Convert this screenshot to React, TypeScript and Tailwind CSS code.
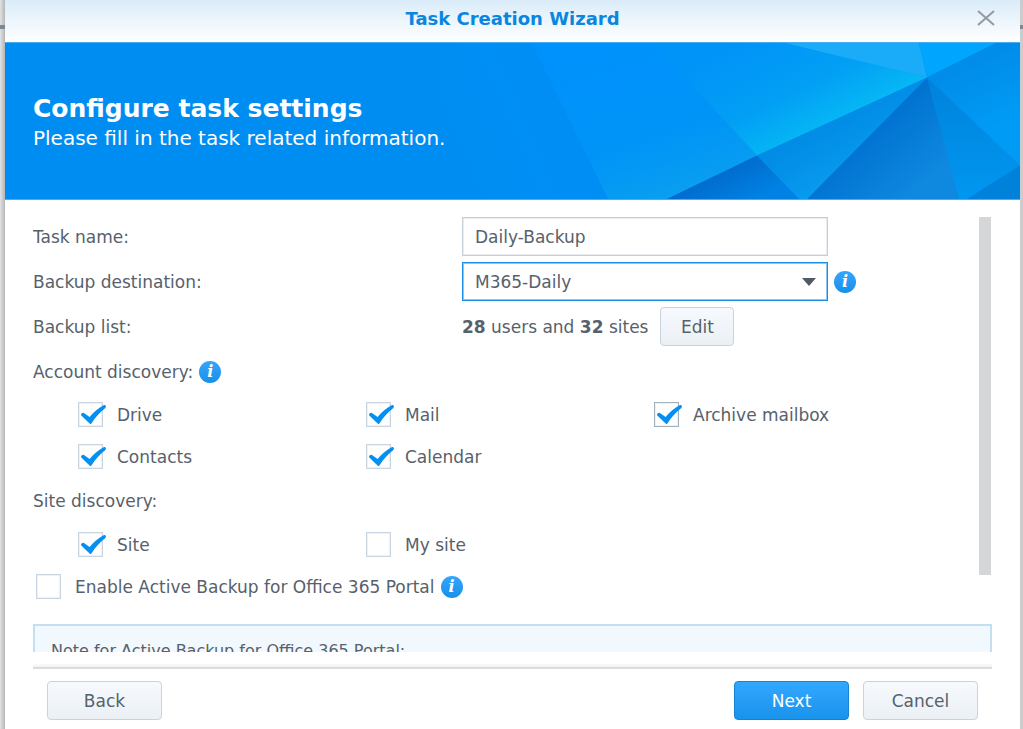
import React, { useState } from 'react';

interface CheckItemProps {
  label: string;
  defaultChecked?: boolean;
  active?: boolean;
}

const CheckItem: React.FC<CheckItemProps> = ({ label, defaultChecked = false, active = false }) => {
  const [checked, setChecked] = useState(defaultChecked);

  return (
    <label className="flex h-[25px] items-center gap-[14px]">
      <span className="relative block size-[25px] shrink-0">
        <input
          type="checkbox"
          checked={checked}
          onChange={e => setChecked(e.target.checked)}
          className={`block size-[25px] appearance-none border bg-white shadow-[inset_0_0_0_1px_#eef1f5] ${active ? 'border-[#a3b1bf]' : 'border-[#c9d4e0]'}`}
        />
        {checked && (
          <svg viewBox="0 0 29 26" className="pointer-events-none absolute top-0 left-0 h-[26px] w-[29px]" aria-hidden="true">
            <path
              d="M3 13.2 C2.8 12 4.6 10.4 6 11 L11.6 15 C15.5 10.2 20.5 5.8 26 3 C27.6 2.6 28.6 4.6 27.4 6 C22.2 9.8 17.2 15.6 13.4 21.4 C12.9 22.2 12.2 22.2 11.6 21.5 Z"
              fill="#058ff2"
            />
          </svg>
        )}
      </span>
      <span>{label}</span>
    </label>
  );
};

const InfoButton: React.FC<{ topic: string }> = ({ topic }) => (
  <button
    type="button"
    aria-label={`About ${topic}`}
    className="flex size-[22px] shrink-0 items-center justify-center rounded-full bg-linear-to-b from-[#35a5fb] to-[#1590ea] font-['DejaVu_Serif',serif] text-[16px] leading-none font-bold text-white italic"
  >
    i
  </button>
);

interface WizardButtonProps {
  primary?: boolean;
  compact?: boolean;
  children: React.ReactNode;
}

const WizardButton: React.FC<WizardButtonProps> = ({ primary = false, compact = false, children }) => (
  <button
    type="button"
    className={`h-[39px] rounded-[4px] border ${compact ? 'w-[74px]' : 'w-[115px]'} ${
      primary
        ? 'border-[#1583d2] bg-linear-to-b from-[#32a7ff] to-[#1893ec] text-white'
        : 'border-[#c9d3dd] bg-linear-to-b from-[#f6fafe] to-[#ebf0f5]'
    }`}
  >
    {children}
  </button>
);

const BannerArt = () => (
  <svg viewBox="0 0 580 158" className="absolute top-0 right-0 h-full w-[580px]" preserveAspectRatio="none" aria-hidden="true">
    <defs>
      <linearGradient id="fade" gradientUnits="userSpaceOnUse" x1="0" y1="60" x2="140" y2="0">
        <stop offset="0" stopColor="#008df1" />
        <stop offset="0.4" stopColor="#008ff6" />
        <stop offset="0.75" stopColor="#008ef4" />
        <stop offset="1" stopColor="#008aea" />
      </linearGradient>
      <linearGradient id="slab" gradientUnits="userSpaceOnUse" x1="190" y1="0" x2="240" y2="155">
        <stop offset="0" stopColor="#0092fc" />
        <stop offset="0.6" stopColor="#0094f7" />
        <stop offset="1" stopColor="#0a9ff0" />
      </linearGradient>
      <linearGradient id="glow" gradientUnits="userSpaceOnUse" x1="330" y1="-20" x2="385" y2="88">
        <stop offset="0" stopColor="#0093f8" />
        <stop offset="0.6" stopColor="#029ff4" />
        <stop offset="1" stopColor="#06b8f5" />
      </linearGradient>
      <linearGradient id="right" gradientUnits="userSpaceOnUse" x1="520" y1="10" x2="555" y2="85">
        <stop offset="0" stopColor="#008ae6" />
        <stop offset="1" stopColor="#009bf5" />
      </linearGradient>
      <linearGradient id="rightLow" x1="0" y1="0" x2="0" y2="1">
        <stop offset="0" stopColor="#0082dc" />
        <stop offset="1" stopColor="#0097f0" />
      </linearGradient>
      <linearGradient id="deep" gradientUnits="userSpaceOnUse" x1="425" y1="95" x2="475" y2="150">
        <stop offset="0" stopColor="#0073d0" />
        <stop offset="1" stopColor="#0f88e0" />
      </linearGradient>
      <linearGradient id="fold" gradientUnits="userSpaceOnUse" x1="350" y1="95" x2="385" y2="158">
        <stop offset="0" stopColor="#008ae4" />
        <stop offset="1" stopColor="#099df0" />
      </linearGradient>
      <linearGradient id="corner" gradientUnits="userSpaceOnUse" x1="272" y1="136" x2="290" y2="172">
        <stop offset="0" stopColor="#006dcf" />
        <stop offset="1" stopColor="#0082e4" />
      </linearGradient>
    </defs>
    <rect width="580" height="158" fill="#008df1" />
    <polygon points="0,0 92,0 168,158 0,158" fill="url(#fade)" />
    <polygon points="92,0 212,0 317,114 227,158 168,158" fill="url(#slab)" />
    <polygon points="212,0 345,0 487,35 317,114" fill="url(#glow)" />
    <polygon points="345,0 479,0 487,35" fill="#1aacf9" />
    <polygon points="479,0 556,0 487,35" fill="#00a6fe" />
    <polygon points="556,0 580,0 580,124 487,35" fill="url(#right)" />
    <polygon points="487,35 580,124 527,158 519,158" fill="url(#rightLow)" />
    <polygon points="580,124 580,158 527,158" fill="#0081da" />
    <polygon points="487,35 519,158 367,158" fill="url(#deep)" />
    <polygon points="487,35 367,158 359,158 317,114" fill="url(#fold)" />
    <polygon points="317,114 359,158 227,158" fill="url(#corner)" />
  </svg>
);

const App = () => {
  const [taskName, setTaskName] = useState('Daily-Backup');

  return (
    <div className="flex h-screen overflow-hidden bg-[#d4d6d8] font-['DejaVu_Sans',Verdana,sans-serif] text-[17px] leading-[22px] text-[#57616b]">
      {/* desktop visible behind the dialog */}
      <div className="w-[5px] shrink-0 bg-linear-to-r from-[#e2e3e4] to-[#b4b5b6]">
        <div className="mt-[25px] h-1 bg-[#7e8890]" />
      </div>

      <main className="flex min-w-0 flex-1 flex-col bg-white">
        <header className="relative flex h-[42px] shrink-0 items-center justify-center bg-linear-to-b from-[#daecf9] to-white pb-1">
          <h1 className="text-[18px] font-bold text-[#0a86e0]">Task Creation Wizard</h1>
          <button type="button" aria-label="Close" className="absolute top-[10px] right-[25px]">
            <svg viewBox="0 0 18 16" className="h-4 w-[18px]" aria-hidden="true">
              <path d="M1 1 L17 15 M17 1 L1 15" stroke="#96999c" strokeWidth="2" fill="none" />
            </svg>
          </button>
        </header>

        <section className="relative flex h-[158px] shrink-0 flex-col justify-center border-y border-[#46aef5] bg-[#008df1] pt-1 pl-7 text-white">
          <BannerArt />
          <h2 className="relative text-[25px] leading-[30px] font-bold">Configure task settings</h2>
          <p className="relative text-[20px] leading-[28px]">Please fill in the task related information.</p>
        </section>

        <section className="relative mx-7 min-h-0 flex-1 overflow-hidden pt-[17px]">
          <div className="flex flex-col gap-[6px]">
            <div className="flex h-[39px] items-center">
              <label htmlFor="task-name" className="w-[429px] shrink-0">Task name:</label>
              <input
                id="task-name"
                value={taskName}
                onChange={e => setTaskName(e.target.value)}
                className="h-[39px] w-[366px] border border-[#c5cfda] bg-white px-3 shadow-[inset_0_0_0_1px_#e9edf2]"
              />
            </div>

            <div className="flex h-[39px] items-center">
              <label htmlFor="destination" className="w-[429px] shrink-0">Backup destination:</label>
              <div className="relative mr-[6px]">
                <select
                  id="destination"
                  className="h-[39px] w-[366px] appearance-none border border-[#1a8ee6] bg-white px-3 shadow-[inset_0_0_0_1px_#8cc6f3] outline-none"
                >
                  <option>M365-Daily</option>
                </select>
                <svg viewBox="0 0 14 8" className="pointer-events-none absolute top-4 right-3 h-2 w-[14px]" aria-hidden="true">
                  <path d="M0 0 H14 L7 8 Z" fill="#505a64" />
                </svg>
              </div>
              <InfoButton topic="backup destination" />
            </div>

            <div className="flex h-[39px] items-center">
              <span className="w-[429px] shrink-0">Backup list:</span>
              <span className="mr-3">
                <b>28</b> users and <b>32</b> sites
              </span>
              <WizardButton compact>Edit</WizardButton>
            </div>

            <div className="flex h-[39px] items-center gap-[6px]">
              <span>Account discovery:</span>
              <InfoButton topic="account discovery" />
            </div>
          </div>

          <div className="mt-[11px] grid grid-cols-3 gap-y-[17px] pr-[50px] pl-[45px]">
            <CheckItem label="Drive" defaultChecked />
            <CheckItem label="Mail" defaultChecked />
            <CheckItem label="Archive mailbox" defaultChecked active />
            <CheckItem label="Contacts" defaultChecked />
            <CheckItem label="Calendar" defaultChecked />
          </div>

          <p className="mt-5 leading-[25px]">Site discovery:</p>

          <div className="mt-[18px] grid grid-cols-3 pr-[50px] pl-[45px]">
            <CheckItem label="Site" defaultChecked />
            <CheckItem label="My site" />
          </div>

          <div className="mt-[17px] flex items-center gap-[6px] pl-[3px]">
            <CheckItem label="Enable Active Backup for Office 365 Portal" />
            <InfoButton topic="the portal" />
          </div>

          <div className="mt-[25px] h-40 border-2 border-[#c5dff2] bg-[#f1f8fe] px-4 pt-[14px]">
            <p className="text-[16px]">Note for Active Backup for Office 365 Portal:</p>
          </div>

          <div className="absolute top-[17px] right-px h-[358px] w-3 bg-[#d4d6d8]" />
        </section>

        <footer className="mx-7 shrink-0 pt-[11px]">
          <div className="h-[6px] border-b-2 border-[#dcdcdc] bg-linear-to-b from-white to-[#f0f0f0]" />
          <div className="flex gap-[14px] px-[14px] pt-3 pb-[9px]">
            <WizardButton>Back</WizardButton>
            <div className="flex-1" />
            <WizardButton primary>Next</WizardButton>
            <WizardButton>Cancel</WizardButton>
          </div>
        </footer>
      </main>

      <div className="w-[3px] shrink-0 bg-[#cbcccd]">
        <div className="mt-[25px] h-1 bg-[#7e8890]" />
      </div>
    </div>
  );
};

export default App;
